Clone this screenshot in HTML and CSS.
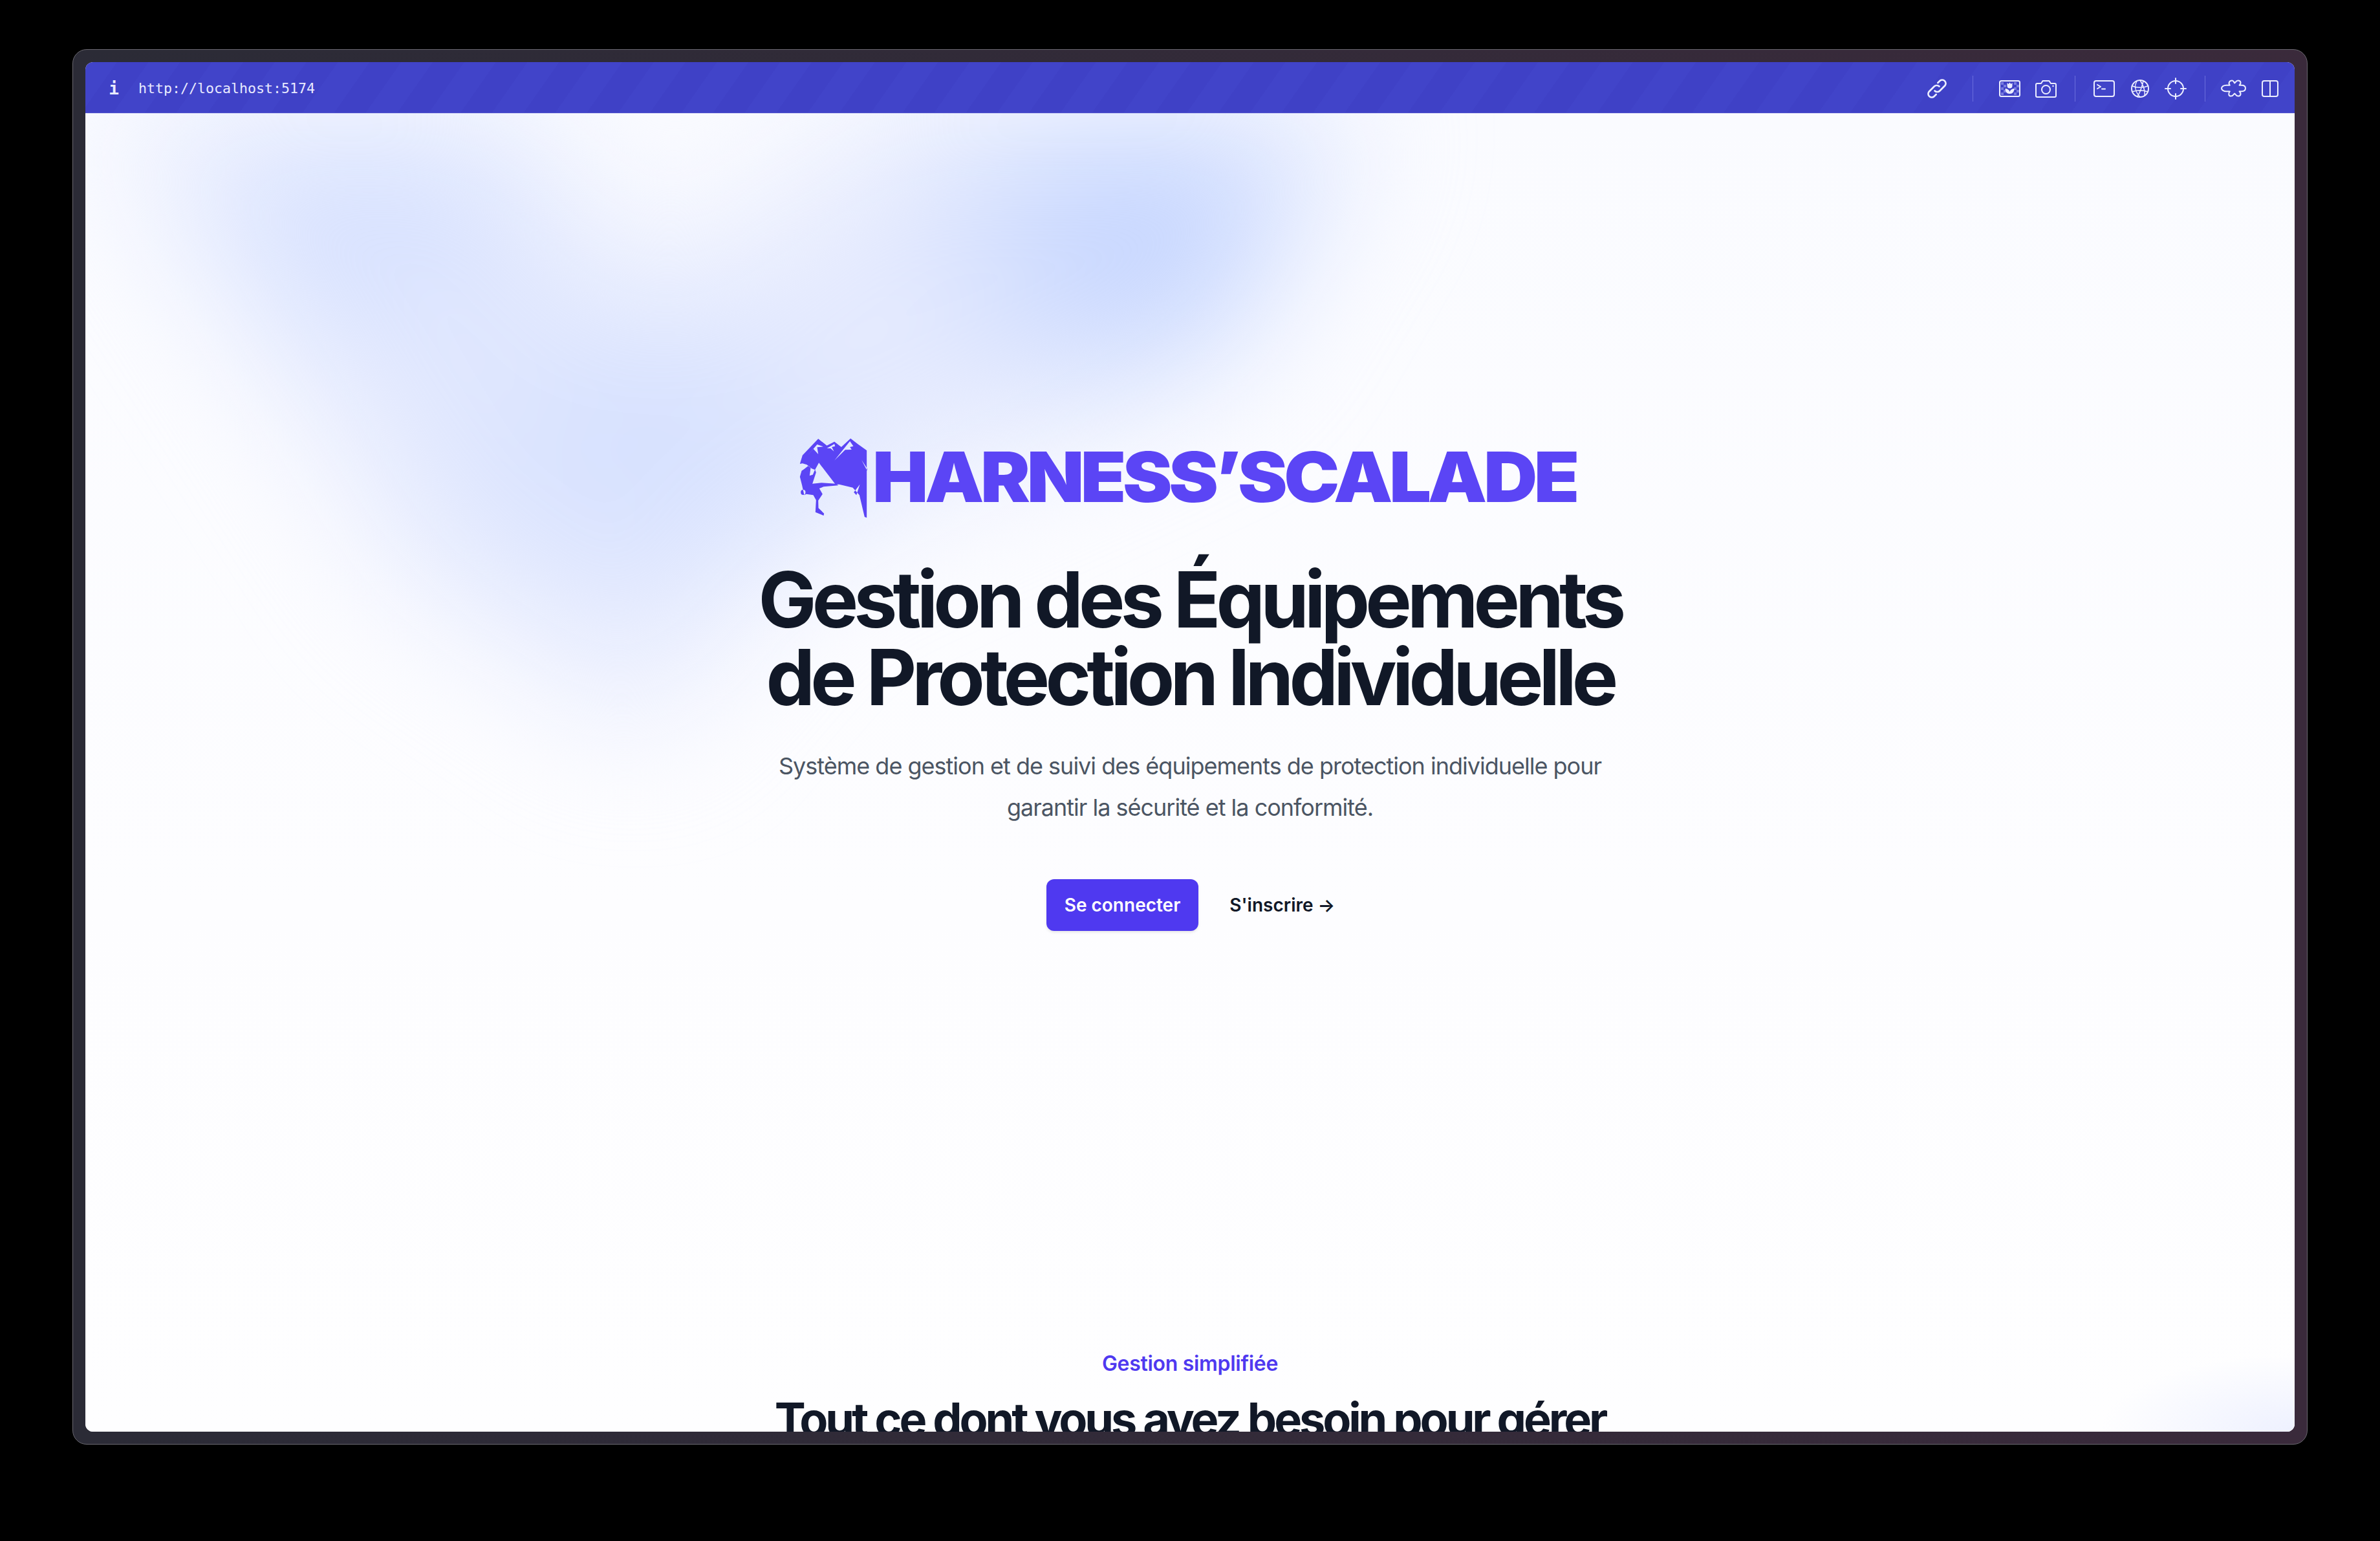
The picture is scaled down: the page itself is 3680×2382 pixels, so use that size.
FILE: index.html
```html
<!DOCTYPE html>
<html lang="fr">
<head>
<meta charset="utf-8">
<title>Harness'Scalade</title>
<link rel="stylesheet" href="styles.css">
</head>
<body>
<div class="frame">
  <div class="window">
    <header class="toolbar">
      <span class="info">i</span>
      <span class="url">http://localhost:5174</span>
      <div class="tools">
        <svg class="ic ic-link" viewBox="5 5 22 22"><path d="M13.500 18.500a4 4 0 0 0 5.600 0l6-6a4 4 0 0 0-5.600-5.600l-2.500 2.500"/><path d="M18.500 13.500a4 4 0 0 0-5.600 0l-6 6a4 4 0 0 0 5.600 5.600l2.500-2.500"/></svg>
        <i class="sep sep-a"></i>
        <svg class="ic ic-img" viewBox="0 0 33 26"><rect x="1" y="1" width="31" height="24" rx="2.500"/><path class="dots" d="M3 3h4v4H3zM3 11h4v4H3zM3 19h4v4H3zM7 7h4v4H7zM7 15h4v4H7zM23 3h4v4h-4zM23 11h4v4h-4zM23 19h4v4h-4zM27 7h4v4h-4zM27 15h4v4h-4z"/><path class="solid" d="M12.500 4l2 2 2-2.500 2 2.500 2-2v4.500a4 4 0 0 1-8 0zM9.500 13c3 0 6 1.500 7 5 1-3.500 4-5 7-5 0 4.500-2.500 8-7 8s-7-3.500-7-8z"/></svg>
        <svg class="ic ic-cam" viewBox="0 0 33 28"><path d="M3 6h6l2.500-4h10L24 6h6a2 2 0 0 1 2 2v17a2 2 0 0 1-2 2H3a2 2 0 0 1-2-2V8a2 2 0 0 1 2-2z"/><circle cx="16.500" cy="15.500" r="6.500"/><circle class="solid" cx="27.500" cy="10" r="1.200"/></svg>
        <i class="sep sep-b"></i>
        <svg class="ic ic-term" viewBox="0 0 33 26"><rect x="1" y="1" width="31" height="24" rx="3"/><path d="M6 7l5 3L6 13M13 13.500h5"/></svg>
        <svg class="ic ic-globe" viewBox="0 0 28 28"><circle cx="14" cy="14" r="13"/><path d="M2 10c7 3 17 3 24 0M2 19c7-3 17-3 24 0M9 2.500c-4 7-3 16 5 24.500M19 2.500c-2 8-4 16-9 23.500M14 1c5 8 8 16 7 23"/></svg>
        <svg class="ic ic-aim" viewBox="0 0 34 34"><circle cx="17" cy="17" r="12"/><path d="M17 1v8M17 25v8M1 17h8M25 17h8"/></svg>
        <i class="sep sep-c"></i>
        <svg class="ic ic-puzzle" viewBox="45 52 116 80"><path d="M48 92C48 84 58 78 70 78L86 78C78 68 84 56 96 56C104 56 106 66 108 68C112 66 114 56 124 56C136 56 140 68 130 78L140 78C152 78 158 84 158 92C158 100 152 106 140 106L130 106C140 116 136 128 124 128C114 128 112 118 108 116C104 118 102 128 92 128C80 128 78 116 86 106L70 106C58 106 48 100 48 92Z"/></svg>
        <svg class="ic ic-panel" viewBox="0 0 26 26"><rect x="1" y="1" width="24" height="24" rx="3"/><path d="M13 1v24"/></svg>
      </div>
    </header>
    <main class="page">
      <div class="blob-a"><div class="blob-shape"></div></div>
      <div class="blob-b"></div>
      <section class="hero">
        <div class="brand">
          <svg class="mark" viewBox="78 80 314 372"><path fill-rule="evenodd" d="M80 200L92 160 165 84 205 115 240 97 272 122 315 82 348 108 390 138V450L380 446 356 345 325 310 262 295 245 295 168 195 150 228 135 222 112 204 92 198zM110 168L160 110 188 120 160 123 165 155 142 130zM205 128L240 108 243 118 228 122 238 142 222 128zM240 184L312 95 328 118 312 122 320 134 290 135zM366 182L392 232V222zM330 332L358 295 342 345z"/><path d="M88 232L100 224 118 210 130 218 125 255 140 250 150 226 155 240 138 292 180 288 248 292 258 300 190 306 170 314 185 340 165 370 166 405 192 430 190 440 152 424 155 368 142 345 110 340 100 345 90 300 80 260zM84 332a11 12 0 1 0 22 0 11 12 0 1 0-22 0z"/></svg>
          <span class="wordmark">HARNESS’SCALADE</span>
        </div>
        <h1>Gestion des Équipements<br>de Protection Individuelle</h1>
        <p class="lead">Système de gestion et de suivi des équipements de protection individuelle pour garantir la sécurité et la conformité.</p>
        <div class="actions">
          <a class="btn">Se connecter</a>
          <a class="link">S'inscrire →</a>
        </div>
      </section>
      <section class="features">
        <p class="eyebrow">Gestion simplifiée</p>
        <h2>Tout ce dont vous avez besoin pour gérer</h2>
      </section>
    </main>
  </div>
</div>
</body>
</html>
```
FILE: styles.css
```css
* { box-sizing: border-box; }
html, body { margin: 0; height: 100%; background: #000; }
body { padding: 76px 112px 149px; font-family: Inter, "Noto Sans", sans-serif; }
.frame {
  height: 2157px;
  padding: 19px;
  border: 1px solid #6a6870;
  border-radius: 22px;
  background: linear-gradient(90deg, #2b2b36, #3a2a3b);
}
.window {
  height: 100%;
  border-radius: 12px;
  overflow: hidden;
  display: flex;
  flex-direction: column;
  background: #fbfbff;
}
.toolbar {
  flex: 0 0 79px;
  display: flex;
  align-items: center;
  padding: 2px 25px 0 36px;
  background: repeating-linear-gradient(125deg, #4144c9 0 40px, #3f41c6 40px 80px);
  box-shadow: inset 0 -1px 0 #5558cf;
  color: #e8eaff;
}
.info { width: 16px; text-align: center; font: 700 26px "DejaVu Sans Mono", monospace; margin-right: 30px; }
.url { font: 21.600px "DejaVu Sans Mono", monospace; }
.tools { margin-left: auto; display: flex; align-items: center; }
.ic { display: block; fill: none; stroke: #eceeff; stroke-width: 2; stroke-linecap: round; stroke-linejoin: round; }
.ic .solid { fill: #eceeff; stroke: none; }
.ic .dots { fill: #7a7de0; stroke: none; }
.ic-link { width: 30px; height: 30px; margin-right: 40px; }
.sep { display: block; width: 1px; height: 40px; background: #6a6ddc; }
.sep-a { margin-right: 40px; }
.ic-img { width: 33px; height: 26px; margin-right: 23px; }
.ic-cam { width: 33px; height: 28px; margin-right: 28px; }
.sep-b { margin-right: 28px; }
.ic-term { width: 33px; height: 26px; margin-right: 25px; }
.ic-globe { width: 28px; height: 28px; margin-right: 24px; }
.ic-globe path { stroke-width: 1.500; }
.ic-aim { width: 34px; height: 34px; margin-right: 28px; }
.sep-c { margin-right: 24px; }
.ic-puzzle { width: 39px; height: 27px; margin-right: 24px; }
.ic-puzzle path { stroke-width: 6; }
.ic-panel { width: 26px; height: 26px; }
.page {
  position: relative;
  flex: 1;
  overflow: hidden;
  background: linear-gradient(180deg, #fafbff 0, #fdfdff 60%, #fefeff 100%);
}
.blob-a {
  position: absolute; left: 0; top: 0; width: 2500px; height: 1500px;
  filter: blur(100px);
}
.blob-shape {
  width: 100%; height: 100%;
  clip-path: polygon(40px 0, 640px 0, 880px 260px, 1240px 0, 1980px 0, 1760px 380px, 1100px 680px, 860px 960px, 500px 720px);
  background:
    radial-gradient(ellipse 400px 340px at 1630px 180px, #bdd0ff 0, #bdd0ff00 100%),
    radial-gradient(ellipse 420px 260px at 860px 520px, #d0ddff 0, #d0ddff00 100%),
    radial-gradient(ellipse 360px 260px at 440px 170px, #d2deff 0, #d2deff00 100%),
    #e6ebfe;
}
.blob-b {
  position: absolute; right: 0; bottom: 0; width: 300px; height: 150px;
  background: radial-gradient(ellipse 300px 120px at 100% 100%, #eef1ff 0, #eef1ff00 100%);
}
.hero { position: relative; display: flex; flex-direction: column; align-items: center; padding-top: 502px; }
.brand { display: flex; align-items: center; gap: 8px; height: 124px; }
.mark { width: 105px; height: 124px; fill: #5b45f5; display: block; }
.wordmark {
  display: block; font-weight: 900; font-size: 107px; letter-spacing: -5px; color: #5b45f5; line-height: 1;
  transform: scaleX(1.076); transform-origin: left center; margin: 0 84px 4px 0;
}
h1 { margin: 66px 0 0; font-size: 120px; line-height: 120px; font-weight: 700; letter-spacing: -6.900px; color: #111827; text-align: center; }
.lead { margin: 45px 0 0; width: 1300px; font-size: 36px; line-height: 64px; letter-spacing: -1px; color: #4b5563; text-align: center; }
.actions { display: flex; align-items: center; gap: 48px; margin-top: 79px; padding-left: 2px; }
.btn { display: block; padding: 0 28px; height: 80px; line-height: 80px; border-radius: 12px; background: #4f39f0; color: #fff; font-size: 28px; font-weight: 600; box-shadow: 0 2px 4px #0000001a; }
.link { font-size: 28px; font-weight: 600; color: #111827; }
.features { position: relative; text-align: center; padding-top: 649px; }
.eyebrow { margin: 0; font-size: 32px; line-height: 40px; font-weight: 600; letter-spacing: -0.300px; color: #4f39f0; }
h2 { margin: 26px 0 0; font-size: 72px; line-height: 80px; font-weight: 700; letter-spacing: -4.100px; color: #111827; }
```
